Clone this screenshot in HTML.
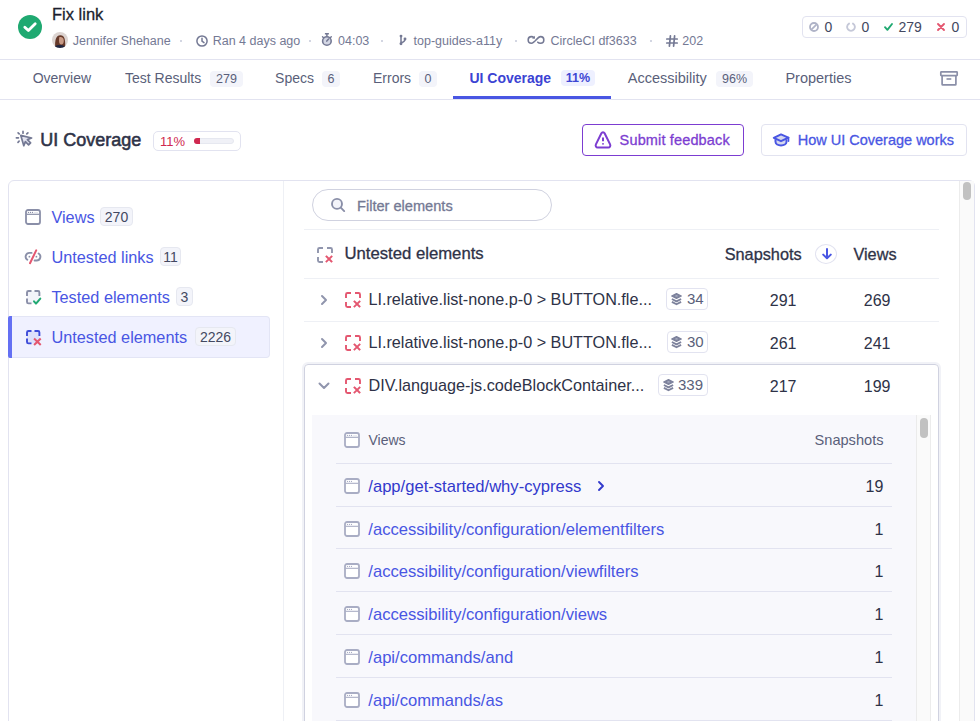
<!DOCTYPE html>
<html><head><meta charset="utf-8">
<style>
*{box-sizing:border-box;margin:0;padding:0}
html,body{width:980px;height:721px;overflow:hidden;background:#fff}
body{font-family:"Liberation Sans",sans-serif;color:#2e3247;position:relative}
.a{position:absolute;white-space:nowrap;line-height:1}
svg{position:absolute;overflow:visible}
.meta{font-size:12.5px;color:#747994}
.dot{position:absolute;width:2px;height:2px;border-radius:1px;background:#c5c8d8}
.tab{font-size:14px;color:#5a5f7a}
.tb{position:absolute;height:16px;top:71px;border-radius:4px;background:#f3f4fa;font-size:12.5px;color:#5a5f7a;line-height:16px;text-align:center}
.hl{position:absolute;height:1px;background:#e2e3f0}
.sbadge{position:absolute;height:19px;border:1px solid #e6e8f0;background:#f3f4fa;border-radius:4px;font-size:14px;color:#434861;line-height:19px;text-align:center}
.side{font-size:16.3px;color:#4956e3}
.num{font-size:16px;color:#2e3247;text-align:right}
.lbadge{position:absolute;height:22px;border:1px solid #e2e3f0;border-radius:4px;background:#fff;font-size:14px;color:#5a5f7a;line-height:20px}
.m{-webkit-text-stroke:0.3px currentColor}
.vlink{font-size:16.6px;color:#4956e3}
</style></head><body>

<!-- HEADER -->
<svg style="left:18px;top:15px" width="24" height="24" viewBox="0 0 24 24"><circle cx="12" cy="12" r="12" fill="#1fa971"/><path d="M6.8 12.2 L10.4 15.6 L17.2 8.8" fill="none" stroke="#fff" stroke-width="2.8" stroke-linecap="round" stroke-linejoin="round"/></svg>
<div class="a m" style="left:52px;top:5.6px;font-size:16.5px;color:#1b1e2e">Fix link</div>

<svg style="left:52px;top:32px" width="16" height="16" viewBox="0 0 16 16"><defs><clipPath id="av"><circle cx="8" cy="8" r="8"/></clipPath></defs><g clip-path="url(#av)"><rect width="16" height="16" fill="#dcd4d1"/><path d="M3.2 15C2.8 9 3.5 3.2 8.4 3.2C12.6 3.2 13.4 7.5 13.2 15Z" fill="#66392a"/><path d="M7.2 5.2C9 4.6 11.6 5 11.8 8.2C12 11 10.8 12.6 9.4 12.6C7.8 12.6 7 11 7 8.5Z" fill="#c99b86"/><path d="M1 16.5C3 13.6 5.5 12.8 7.5 13.2C10 12.8 12.5 13.6 15 16.5Z" fill="#1f2540"/></g></svg>
<div class="a meta" style="left:72.7px;top:35.4px">Jennifer Shehane</div>
<div class="dot" style="left:180px;top:40px"></div>
<svg style="left:196px;top:34.5px" width="12" height="12" viewBox="0 0 12 12"><circle cx="6" cy="6" r="5.1" fill="none" stroke="#747994" stroke-width="1.5"/><path d="M6 3.2V6.2L8 7.6" fill="none" stroke="#747994" stroke-width="1.5" stroke-linecap="round"/></svg>
<div class="a meta" style="left:212.7px;top:35.4px">Ran 4 days ago</div>
<div class="dot" style="left:309px;top:40px"></div>
<svg style="left:316px;top:30px" width="20" height="20" viewBox="0 0 20 20"><circle cx="10.9" cy="11" r="4.3" fill="#d3d6e4" stroke="#747994" stroke-width="1.6"/><path d="M8.9 3.7H12.9M10.9 3.7V6.4" stroke="#747994" stroke-width="1.5"/><path d="M6.5 6.7L7.6 7.8M15.3 6.7L14.2 7.8" stroke="#747994" stroke-width="1.4" stroke-linecap="round"/><path d="M10.8 11.1L12.6 9" stroke="#747994" stroke-width="1.5" stroke-linecap="round"/></svg>
<div class="a meta" style="left:338px;top:35.4px">04:03</div>
<div class="dot" style="left:381px;top:40px"></div>
<svg style="left:392px;top:30px" width="20" height="20" viewBox="0 0 20 20"><g fill="#747994"><circle cx="9" cy="6.1" r="1.45"/><circle cx="9" cy="13.7" r="1.45"/><circle cx="13" cy="9" r="1.45"/></g><path d="M9 6V13.8M13 9C13 11.2 11.6 12.2 9.4 12.6" fill="none" stroke="#747994" stroke-width="1.5"/></svg>
<div class="a meta" style="left:413.5px;top:35.4px">top-guides-a11y</div>
<div class="dot" style="left:515px;top:40px"></div>
<svg style="left:522px;top:30px" width="28" height="20" viewBox="0 0 28 20"><path d="M15.8 12.2C16.5 12.9 17.4 13.2 18.5 13.2A3.3 3.3 0 0 0 18.5 6.6C15.5 6.6 12.8 13.2 9.5 13.2A3.3 3.3 0 0 1 9.5 6.6C10.5 6.6 11.3 7 11.9 7.5" fill="none" stroke="#747994" stroke-width="1.6" stroke-linecap="round"/><path d="M12.9 5.8L12.9 8.8L10 8.6Z" fill="#747994"/></svg>
<div class="a meta" style="left:550.5px;top:35.4px">CircleCI df3633</div>
<div class="dot" style="left:650px;top:40px"></div>
<svg style="left:666px;top:35px" width="12" height="12" viewBox="0 0 12 12"><path d="M4.4 0.8L3.4 11.2M8.6 0.8L7.6 11.2M0.8 4H11.2M0.8 8H11.2" fill="none" stroke="#747994" stroke-width="1.7" stroke-linecap="round"/></svg>
<div class="a meta" style="left:682.3px;top:35.4px">202</div>

<!-- status box -->
<div style="position:absolute;left:802px;top:16px;width:165px;height:22px;border:1px solid #e2e3f0;border-radius:4px"></div>
<svg style="left:809px;top:22px" width="10" height="10" viewBox="0 0 10 10"><circle cx="5" cy="5" r="4" fill="none" stroke="#afb3c7" stroke-width="1.8"/><path d="M2.4 7.6L7.6 2.4" stroke="#afb3c7" stroke-width="1.8"/></svg>
<div class="a" style="left:824.4px;top:20.2px;font-size:14px;color:#434861">0</div>
<svg style="left:846px;top:22px" width="10" height="10" viewBox="0 0 10 10"><path d="M6.95 1.6A3.9 3.9 0 1 1 3.05 1.6" fill="none" stroke="#c5c8d8" stroke-width="1.9" stroke-linecap="round"/></svg>
<div class="a" style="left:861.5px;top:20.2px;font-size:14px;color:#434861">0</div>
<svg style="left:884px;top:23px" width="9" height="8" viewBox="0 0 9 8"><path d="M1 4.2L3.4 6.8L8 1" fill="none" stroke="#1fa971" stroke-width="1.9" stroke-linecap="round" stroke-linejoin="round"/></svg>
<div class="a" style="left:898.4px;top:20.2px;font-size:14px;color:#434861">279</div>
<svg style="left:937px;top:23px" width="8" height="8" viewBox="0 0 8 8"><path d="M1 1L7 7M7 1L1 7" stroke="#e45770" stroke-width="1.9" stroke-linecap="round"/></svg>
<div class="a" style="left:951.5px;top:20.2px;font-size:14px;color:#434861">0</div>

<div class="hl" style="left:0;top:59px;width:980px;background:#e2e3f0"></div>

<!-- TABS -->
<div class="a tab" style="left:32.7px;top:71.3px">Overview</div>
<div class="a tab" style="left:125px;top:71.3px">Test Results</div>
<div class="tb" style="left:210px;width:33px">279</div>
<div class="a tab" style="left:275.1px;top:71.3px">Specs</div>
<div class="tb" style="left:322px;width:18px">6</div>
<div class="a tab" style="left:373px;top:71.3px">Errors</div>
<div class="tb" style="left:419px;width:18px">0</div>
<div class="a tab" style="left:469.4px;top:71.3px;color:#3b43d3;font-weight:700">UI Coverage</div>
<div class="tb" style="left:561px;top:70px;width:34px;background:#eef0ff;color:#3d46d3;font-weight:700">11%</div>
<div class="a tab" style="left:627.8px;top:71.3px;font-size:14.5px">Accessibility</div>
<div class="tb" style="left:716px;width:37px">96%</div>
<div class="a tab" style="left:785.4px;top:71.3px;font-size:14.5px">Properties</div>
<svg style="left:936px;top:66px" width="26" height="24" viewBox="0 0 26 24"><rect x="4.8" y="5.8" width="16.4" height="3.8" rx="0.6" fill="none" stroke="#8a8fa8" stroke-width="1.7"/><path d="M6.1 9.8V18.2C6.1 18.6 6.4 18.9 6.8 18.9H19.2C19.6 18.9 19.9 18.6 19.9 18.2V9.8" fill="none" stroke="#8a8fa8" stroke-width="1.7"/><path d="M10.5 13H15.3" stroke="#8a8fa8" stroke-width="1.6"/></svg>
<div class="hl" style="left:0;top:99px;width:980px"></div>
<div style="position:absolute;left:453px;top:96px;width:158px;height:3px;background:#4956e3"></div>

<!-- HEADING -->
<svg style="left:12px;top:127px" width="24" height="24" viewBox="0 0 24 24"><path d="M8.8 8.4L19.6 11L15.4 12.6L18.6 15.8L16.6 17.8L13.4 14.6L11.8 18.8Z" fill="#e2e3f0" stroke="#747994" stroke-width="1.7" stroke-linejoin="round"/><path d="M11 4.4V6.2M6.1 5.8L7.2 6.9M15.9 5.8L14.8 6.9M4.4 10.8H6.4M6 15.3L7.1 14.2" stroke="#747994" stroke-width="1.7" stroke-linecap="round"/></svg>
<div class="a" style="left:40.2px;top:130.6px;font-size:18px;-webkit-text-stroke:0.55px currentColor;color:#2e3247">UI Coverage</div>
<div style="position:absolute;left:153px;top:131px;width:88px;height:20px;border:1px solid #e2e3f0;border-radius:5px"></div>
<div class="a" style="left:160px;top:135px;font-size:13px;color:#d0284f">11%</div>
<div style="position:absolute;left:194px;top:138px;width:40px;height:6px;border-radius:3px;background:#f0f1f7;border:1px solid #e6e8f0"></div>
<div style="position:absolute;left:194px;top:138px;width:5.5px;height:6px;border-radius:3px 0 0 3px;background:#d0284f"></div>

<div style="position:absolute;left:582px;top:124px;width:162px;height:32px;border:1px solid #7c3dd1;border-radius:4px"></div>
<svg style="left:591px;top:128px" width="24" height="24" viewBox="0 0 24 24"><path d="M10.4 5.3C11.1 4 12.9 4 13.6 5.3L19.1 16.4C19.8 17.8 18.9 19.5 17.3 19.5H6.7C5.1 19.5 4.2 17.8 4.9 16.4Z" fill="none" stroke="#7c3dd1" stroke-width="2" stroke-linejoin="round"/><path d="M12 9.6V13.2" stroke="#7c3dd1" stroke-width="2"/><path d="M12 15.2V16.6" stroke="#7c3dd1" stroke-width="2"/></svg>
<div class="a m" style="left:619.6px;top:132.8px;font-size:14.5px;color:#7c3dd1;letter-spacing:0.15px">Submit feedback</div>

<div style="position:absolute;left:761px;top:124px;width:206px;height:32px;border:1px solid #e2e3f0;border-radius:4px"></div>
<svg style="left:769px;top:128px" width="24" height="24" viewBox="0 0 24 24"><path d="M6.5 11.3V13.8C6.5 16 9 17.4 12 17.4C15 17.4 17.5 16 17.5 13.8V11.3" fill="#d5d8ee" stroke="#4956e3" stroke-width="2"/><path d="M4.8 9.8L12 6.4L19.4 9.6L12 13.2Z" fill="#d5d8ee" stroke="#4956e3" stroke-width="2" stroke-linejoin="round"/><path d="M19.5 9.6V13.2" stroke="#4956e3" stroke-width="1.6" stroke-linecap="round"/></svg>
<div class="a m" style="left:797.7px;top:132.8px;font-size:14.5px;color:#4956e3">How UI Coverage works</div>

<!-- PANEL -->
<div style="position:absolute;left:8px;top:180px;width:967px;height:600px;border:1px solid #e2e3f0;border-radius:6px"></div>
<div style="position:absolute;left:283px;top:181px;width:1px;height:540px;background:#eef0f5"></div>

<!-- sidebar -->
<svg style="left:21px;top:205px" width="24" height="24" viewBox="0 0 24 24"><rect x="5" y="5" width="14" height="14" rx="2" fill="none" stroke="#8a8fa8" stroke-width="1.8"/><path d="M5.5 9.3H18.5" stroke="#8a8fa8" stroke-width="1.2"/><g fill="#8a8fa8"><circle cx="7.5" cy="7.4" r="0.65"/><circle cx="9.5" cy="7.4" r="0.65"/><circle cx="11.5" cy="7.4" r="0.65"/></g><path d="M13 7.4H17" stroke="#8a8fa8" stroke-width="0.5" opacity="0.5"/></svg>
<div class="a side" style="left:51.4px;top:208.8px">Views</div>
<div class="sbadge" style="left:100px;top:207px;width:33px">270</div>

<svg style="left:21px;top:245px" width="24" height="24" viewBox="0 0 24 24"><path d="M10.6 7.9H8.8A3.8 3.8 0 0 0 6.3 14.8M13.6 15.5H15.4A3.8 3.8 0 0 0 17.6 8.5" fill="none" stroke="#8a8fa8" stroke-width="1.9" stroke-linecap="round"/><circle cx="8.4" cy="11.7" r="0.9" fill="#8a8fa8"/><circle cx="15.4" cy="11.7" r="0.9" fill="#8a8fa8"/><path d="M15.2 5.4L9 18.2" stroke="#e45770" stroke-width="2" stroke-linecap="round"/></svg>
<div class="a side" style="left:51.4px;top:248.8px">Untested links</div>
<div class="sbadge" style="left:160px;top:247px;width:21px">11</div>

<svg style="left:21px;top:286px" width="24" height="24" viewBox="0 0 24 24"><rect x="6" y="5" width="12.4" height="12.4" fill="#f3f4fa"/><path d="M6 10V6.5C6 5.7 6.7 5 7.5 5H10.5M13.5 5H17C17.8 5 18.4 5.7 18.4 6.5V10M6 12.5V16C6 16.8 6.7 17.4 7.5 17.4H10.5" fill="none" stroke="#8a8fa8" stroke-width="1.9"/><path d="M13 15.3L15 17.6L19.3 12.6" fill="none" stroke="#1fa971" stroke-width="2" stroke-linecap="round" stroke-linejoin="round"/></svg>
<div class="a side" style="left:51.4px;top:288.8px">Tested elements</div>
<div class="sbadge" style="left:176px;top:287px;width:17px">3</div>

<div style="position:absolute;left:8px;top:316px;width:262px;height:42px;background:#f0f1ff;border:1px solid #e3e5f5;border-left:none;border-radius:0 4px 4px 0"></div>
<div style="position:absolute;left:8px;top:316px;width:4px;height:42px;background:#6470f3;border-radius:2px 0 0 2px"></div>
<svg style="left:21px;top:326px" width="24" height="24" viewBox="0 0 24 24"><rect x="6" y="5" width="12.4" height="12.4" fill="#dde0fb"/><path d="M6 10V6.5C6 5.7 6.7 5 7.5 5H10.5M13.5 5H17C17.8 5 18.4 5.7 18.4 6.5V10M6 12.5V16C6 16.8 6.7 17.4 7.5 17.4H10.5" fill="none" stroke="#3d4bd9" stroke-width="1.9"/><path d="M13.8 13.2L19 18.3M19 13.2L13.8 18.3" stroke="#e45770" stroke-width="2" stroke-linecap="square"/></svg>
<div class="a side" style="left:51.4px;top:328.8px">Untested elements</div>
<div class="sbadge" style="left:195px;top:327px;width:41px">2226</div>

<!-- outer scrollbar -->
<div style="position:absolute;left:959px;top:181px;width:15px;height:540px;background:#fafafa;border-left:1px solid #ececec"></div>
<div style="position:absolute;left:963px;top:182px;width:8px;height:18px;background:#c1c1c1;border-radius:4px"></div>

<!-- filter -->
<div style="position:absolute;left:312px;top:189px;width:240px;height:32px;border:1px solid #d0d2e0;border-radius:16px"></div>
<svg style="left:326px;top:193px" width="24" height="24" viewBox="0 0 24 24"><circle cx="11" cy="10.9" r="5" fill="#f3f4fa" stroke="#8a8fa8" stroke-width="1.9"/><path d="M14.8 14.7L18.2 18.1" stroke="#8a8fa8" stroke-width="1.9" stroke-linecap="round"/></svg>
<div class="a m" style="left:357px;top:199.4px;font-size:14.6px;color:#747994">Filter elements</div>
<div class="hl" style="left:304px;top:229px;width:635px;background:#eef0f5"></div>

<!-- table header -->
<svg style="left:313px;top:243px" width="24" height="24" viewBox="0 0 24 24"><path d="M5 10V6.5C5 5.7 5.7 5 6.5 5H10M14 5H17.5C18.3 5 19 5.7 19 6.5V10M5 14V17.5C5 18.3 5.7 19 6.5 19H10" fill="none" stroke="#9095ad" stroke-width="1.9"/><path d="M13.5 13.5L18.5 18.5M18.5 13.5L13.5 18.5" stroke="#e45770" stroke-width="1.9" stroke-linecap="square"/></svg>
<div class="a m" style="left:344.5px;top:246px;font-size:16.7px;color:#2e3247">Untested elements</div>
<div class="a m" style="left:724.7px;top:246px;font-size:16.3px;color:#2e3247">Snapshots</div>
<div style="position:absolute;left:815px;top:244px;width:22px;height:20px;border:1px solid #e2e3f0;border-radius:50%"></div>
<svg style="left:821.5px;top:248px" width="10" height="12" viewBox="0 0 10 12"><path d="M5 1V10.3M1.2 6.6L5 10.4L8.8 6.6" fill="none" stroke="#4956e3" stroke-width="2" stroke-linecap="round" stroke-linejoin="round"/></svg>
<div class="a m" style="left:853.4px;top:246px;font-size:16.3px;color:#2e3247">Views</div>
<div class="hl" style="left:304px;top:278px;width:635px;background:#eef0f5"></div>

<!-- row 1 -->
<svg style="left:320px;top:295px" width="8" height="10" viewBox="0 0 8 10"><path d="M2 1L6 5L2 9" fill="none" stroke="#9095ad" stroke-width="2" stroke-linecap="round" stroke-linejoin="round"/></svg>
<svg style="left:341px;top:288.0px" width="24" height="24" viewBox="0 0 24 24"><path d="M5 10V6.5C5 5.7 5.7 5 6.5 5H10M14 5H17.5C18.3 5 19 5.7 19 6.5V10M5 14V17.5C5 18.3 5.7 19 6.5 19H10" fill="none" stroke="#e45770" stroke-width="1.9"/><path d="M13.5 13.5L18.5 18.5M18.5 13.5L13.5 18.5" stroke="#e45770" stroke-width="1.9" stroke-linecap="square"/></svg>
<div class="a" style="left:368.4px;top:290.8px;font-size:16.2px;color:#2e3247">LI.relative.list-none.p-0 &gt; BUTTON.fle...</div>
<div class="lbadge" style="left:666px;top:288px;width:42px"></div>
<svg style="left:671px;top:293px" width="11" height="12" viewBox="0 0 11 12"><path d="M5.5 0.6L10.3 3L5.5 5.4L0.7 3Z" fill="#7d829c" stroke="#7d829c" stroke-width="1.2" stroke-linejoin="round"/><path d="M0.9 6L5.5 8.4L10.1 6M0.9 8.9L5.5 11.3L10.1 8.9" fill="none" stroke="#7d829c" stroke-width="1.8" stroke-linejoin="round"/><ellipse cx="5.5" cy="2.9" rx="1.3" ry="0.7" fill="#b5b9cc"/></svg><div class="a" style="left:687px;top:290.9px;font-size:15px;color:#5a5f7a">34</div>
<div class="a num" style="left:746.5px;width:50px;top:292.8px">291</div>
<div class="a num" style="left:840.5px;width:50px;top:292.8px">269</div>
<div class="hl" style="left:304px;top:321px;width:635px;background:#eef0f5"></div>

<!-- row 2 -->
<svg style="left:320px;top:338px" width="8" height="10" viewBox="0 0 8 10"><path d="M2 1L6 5L2 9" fill="none" stroke="#9095ad" stroke-width="2" stroke-linecap="round" stroke-linejoin="round"/></svg>
<svg style="left:341px;top:331.0px" width="24" height="24" viewBox="0 0 24 24"><path d="M5 10V6.5C5 5.7 5.7 5 6.5 5H10M14 5H17.5C18.3 5 19 5.7 19 6.5V10M5 14V17.5C5 18.3 5.7 19 6.5 19H10" fill="none" stroke="#e45770" stroke-width="1.9"/><path d="M13.5 13.5L18.5 18.5M18.5 13.5L13.5 18.5" stroke="#e45770" stroke-width="1.9" stroke-linecap="square"/></svg>
<div class="a" style="left:368.4px;top:333.8px;font-size:16.2px;color:#2e3247">LI.relative.list-none.p-0 &gt; BUTTON.fle...</div>
<div class="lbadge" style="left:667px;top:331px;width:41px"></div>
<svg style="left:671px;top:336px" width="11" height="12" viewBox="0 0 11 12"><path d="M5.5 0.6L10.3 3L5.5 5.4L0.7 3Z" fill="#7d829c" stroke="#7d829c" stroke-width="1.2" stroke-linejoin="round"/><path d="M0.9 6L5.5 8.4L10.1 6M0.9 8.9L5.5 11.3L10.1 8.9" fill="none" stroke="#7d829c" stroke-width="1.8" stroke-linejoin="round"/><ellipse cx="5.5" cy="2.9" rx="1.3" ry="0.7" fill="#b5b9cc"/></svg><div class="a" style="left:687px;top:333.9px;font-size:15px;color:#5a5f7a">30</div>
<div class="a num" style="left:746.5px;width:50px;top:335.8px">261</div>
<div class="a num" style="left:840.5px;width:50px;top:335.8px">241</div>

<!-- expanded -->
<div style="position:absolute;left:304px;top:364px;width:635px;height:400px;border:1px solid #d0d2e0;border-radius:4px;box-shadow:0 0 0 2px #f1f2f7"></div>
<svg style="left:318px;top:382px" width="12" height="8" viewBox="0 0 12 8"><path d="M1.5 1.5L6 6L10.5 1.5" fill="none" stroke="#9095ad" stroke-width="2" stroke-linecap="round" stroke-linejoin="round"/></svg>
<svg style="left:341px;top:374.0px" width="24" height="24" viewBox="0 0 24 24"><path d="M5 10V6.5C5 5.7 5.7 5 6.5 5H10M14 5H17.5C18.3 5 19 5.7 19 6.5V10M5 14V17.5C5 18.3 5.7 19 6.5 19H10" fill="none" stroke="#e45770" stroke-width="1.9"/><path d="M13.5 13.5L18.5 18.5M18.5 13.5L13.5 18.5" stroke="#e45770" stroke-width="1.9" stroke-linecap="square"/></svg>
<div class="a" style="left:368.5px;top:376.8px;font-size:16.2px;color:#2e3247">DIV.language-js.codeBlockContainer...</div>
<div class="lbadge" style="left:658px;top:374px;width:50px"></div>
<svg style="left:663px;top:379px" width="11" height="12" viewBox="0 0 11 12"><path d="M5.5 0.6L10.3 3L5.5 5.4L0.7 3Z" fill="#7d829c" stroke="#7d829c" stroke-width="1.2" stroke-linejoin="round"/><path d="M0.9 6L5.5 8.4L10.1 6M0.9 8.9L5.5 11.3L10.1 8.9" fill="none" stroke="#7d829c" stroke-width="1.8" stroke-linejoin="round"/><ellipse cx="5.5" cy="2.9" rx="1.3" ry="0.7" fill="#b5b9cc"/></svg><div class="a" style="left:678px;top:376.9px;font-size:15px;color:#5a5f7a">339</div>
<div class="a num" style="left:746.5px;width:50px;top:378.8px">217</div>
<div class="a num" style="left:840.5px;width:50px;top:378.8px">199</div>

<!-- inner panel -->
<div style="position:absolute;left:312px;top:415px;width:619px;height:306px;background:#f8f8fc"></div>
<div style="position:absolute;left:916px;top:415px;width:15px;height:306px;background:#fafafa;border-left:1px solid #ebebeb;border-right:1px solid #ececec"></div>
<div style="position:absolute;left:920px;top:418px;width:8px;height:20px;background:#c1c1c1;border-radius:4px"></div>

<svg style="left:340px;top:428px" width="24" height="24" viewBox="0 0 24 24"><rect x="5" y="5" width="14" height="14" rx="2" fill="#fff" stroke="#a9adc4" stroke-width="1.8"/><path d="M5.5 9.3H18.5" stroke="#a9adc4" stroke-width="1.2"/><g fill="#a9adc4"><circle cx="7.5" cy="7.4" r="0.65"/><circle cx="9.5" cy="7.4" r="0.65"/><circle cx="11.5" cy="7.4" r="0.65"/></g><path d="M13 7.4H17" stroke="#a9adc4" stroke-width="0.5" opacity="0.5"/></svg>
<div class="a" style="left:368.5px;top:432.7px;font-size:14px;color:#5a5f7a">Views</div>
<div class="a" style="left:783.5px;width:100px;text-align:right;top:432.7px;font-size:14.6px;color:#5a5f7a">Snapshots</div>
<div class="hl" style="left:336px;top:463px;width:556px"></div>

<svg style="left:340px;top:474px" width="24" height="24" viewBox="0 0 24 24"><rect x="5" y="5" width="14" height="14" rx="2" fill="#fff" stroke="#a9adc4" stroke-width="1.8"></rect><path d="M5.5 9.3H18.5" stroke="#a9adc4" stroke-width="1.1"></path><g fill="#a9adc4"><circle cx="7.5" cy="7.4" r="0.6"></circle><circle cx="9.5" cy="7.4" r="0.6"></circle><circle cx="11.5" cy="7.4" r="0.6"></circle></g></svg>
<div class="a vlink" style="left:368.3px;top:478.5px;color:#3239cc">/app/get-started/why-cypress</div>
<svg style="left:597px;top:481px" width="8" height="10" viewBox="0 0 8 10"><path d="M2 1L6 5L2 9" fill="none" stroke="#3239cc" stroke-width="1.9" stroke-linecap="round" stroke-linejoin="round"></path></svg>
<div class="a num" style="left:783.3px;width:100px;top:478.7px">19</div>
<div class="hl" style="left:336px;top:506px;width:556px"></div>
<svg style="left:340px;top:517px" width="24" height="24" viewBox="0 0 24 24"><rect x="5" y="5" width="14" height="14" rx="2" fill="#fff" stroke="#a9adc4" stroke-width="1.8"></rect><path d="M5.5 9.3H18.5" stroke="#a9adc4" stroke-width="1.1"></path><g fill="#a9adc4"><circle cx="7.5" cy="7.4" r="0.6"></circle><circle cx="9.5" cy="7.4" r="0.6"></circle><circle cx="11.5" cy="7.4" r="0.6"></circle></g></svg>
<div class="a vlink" style="left:368.3px;top:521.5px;">/accessibility/configuration/elementfilters</div>
<div class="a num" style="left:783.3px;width:100px;top:521.7px">1</div>
<div class="hl" style="left:336px;top:548px;width:556px"></div>
<svg style="left:340px;top:559px" width="24" height="24" viewBox="0 0 24 24"><rect x="5" y="5" width="14" height="14" rx="2" fill="#fff" stroke="#a9adc4" stroke-width="1.8"></rect><path d="M5.5 9.3H18.5" stroke="#a9adc4" stroke-width="1.1"></path><g fill="#a9adc4"><circle cx="7.5" cy="7.4" r="0.6"></circle><circle cx="9.5" cy="7.4" r="0.6"></circle><circle cx="11.5" cy="7.4" r="0.6"></circle></g></svg>
<div class="a vlink" style="left:368.3px;top:563.5px;">/accessibility/configuration/viewfilters</div>
<div class="a num" style="left:783.3px;width:100px;top:563.7px">1</div>
<div class="hl" style="left:336px;top:591px;width:556px"></div>
<svg style="left:340px;top:602px" width="24" height="24" viewBox="0 0 24 24"><rect x="5" y="5" width="14" height="14" rx="2" fill="#fff" stroke="#a9adc4" stroke-width="1.8"></rect><path d="M5.5 9.3H18.5" stroke="#a9adc4" stroke-width="1.1"></path><g fill="#a9adc4"><circle cx="7.5" cy="7.4" r="0.6"></circle><circle cx="9.5" cy="7.4" r="0.6"></circle><circle cx="11.5" cy="7.4" r="0.6"></circle></g></svg>
<div class="a vlink" style="left:368.3px;top:606.5px;">/accessibility/configuration/views</div>
<div class="a num" style="left:783.3px;width:100px;top:606.7px">1</div>
<div class="hl" style="left:336px;top:634px;width:556px"></div>
<svg style="left:340px;top:645px" width="24" height="24" viewBox="0 0 24 24"><rect x="5" y="5" width="14" height="14" rx="2" fill="#fff" stroke="#a9adc4" stroke-width="1.8"></rect><path d="M5.5 9.3H18.5" stroke="#a9adc4" stroke-width="1.1"></path><g fill="#a9adc4"><circle cx="7.5" cy="7.4" r="0.6"></circle><circle cx="9.5" cy="7.4" r="0.6"></circle><circle cx="11.5" cy="7.4" r="0.6"></circle></g></svg>
<div class="a vlink" style="left:368.3px;top:649.5px;">/api/commands/and</div>
<div class="a num" style="left:783.3px;width:100px;top:649.7px">1</div>
<div class="hl" style="left:336px;top:677px;width:556px"></div>
<svg style="left:340px;top:688px" width="24" height="24" viewBox="0 0 24 24"><rect x="5" y="5" width="14" height="14" rx="2" fill="#fff" stroke="#a9adc4" stroke-width="1.8"></rect><path d="M5.5 9.3H18.5" stroke="#a9adc4" stroke-width="1.1"></path><g fill="#a9adc4"><circle cx="7.5" cy="7.4" r="0.6"></circle><circle cx="9.5" cy="7.4" r="0.6"></circle><circle cx="11.5" cy="7.4" r="0.6"></circle></g></svg>
<div class="a vlink" style="left:368.3px;top:692.5px;">/api/commands/as</div>
<div class="a num" style="left:783.3px;width:100px;top:692.7px">1</div>
<div class="hl" style="left:336px;top:720px;width:556px"></div>
</body></html>
